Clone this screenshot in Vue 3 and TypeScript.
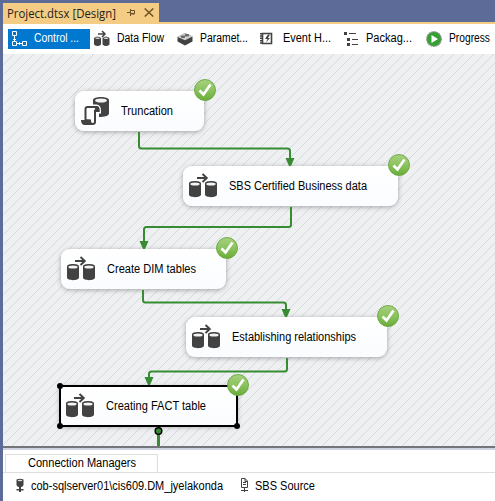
<script setup lang="ts">
interface Tool { name: string; label: string; width: number; column: number }
interface Task { id: string; label: string; x: number; y: number; w: number; textX: number; textW: number; kind: 'script' | 'flow'; selected?: boolean }

const tools: Tool[] = [
  { name: 'control', label: 'Control ...', width: 45, column: 82 },
  { name: 'flow', label: 'Data Flow', width: 47, column: 83 },
  { name: 'params', label: 'Paramet...', width: 48, column: 83 },
  { name: 'events', label: 'Event H...', width: 48, column: 83 },
  { name: 'package', label: 'Packag...', width: 46, column: 83 },
  { name: 'progress', label: 'Progress', width: 41, column: 73 },
]

const tasks: Task[] = [
  { id: 'trunc', label: 'Truncation', x: 75, y: 91, w: 129, textX: 46, textW: 52, kind: 'script' },
  { id: 'sbs', label: 'SBS Certified Business data', x: 183, y: 166, w: 215, textX: 46, textW: 138, kind: 'flow' },
  { id: 'dim', label: 'Create DIM tables', x: 61, y: 249, w: 165, textX: 46, textW: 89, kind: 'flow' },
  { id: 'rel', label: 'Establishing relationships', x: 186, y: 317, w: 201, textX: 46, textW: 124, kind: 'flow' },
  { id: 'fact', label: 'Creating FACT table', x: 60, y: 386, w: 177, textX: 46, textW: 100, kind: 'flow', selected: true },
]

const links: string[] = [
  'M139 132V146Q139 148.500 141.500 148.500H287.500Q290 148.500 290 151V159',
  'M291 207V224.500Q291 227 288.500 227H146.500Q144 227 144 229.500V242',
  'M143 290V300Q143 302.500 145.500 302.500H283.500Q286 302.500 286 305V310',
  'M287 358V369Q287 371.500 284.500 371.500H151.500Q149 371.500 149 374V378',
]
const arrows: [number, number][] = [[290, 166], [144, 249], [286, 317], [149, 385]]
</script>

<template>
  <div class="window">
    <header class="tabs">
      <div class="doc-tab">
        <svg class="label" width="112" height="19"><text class="title" x="0" y="15" textLength="109" lengthAdjust="spacingAndGlyphs">Project.dtsx [Design]</text></svg>
        <svg class="pin" width="9" height="9" viewBox="0 0 9 9"><path d="M0 4.500H3M3.500 1V8M3.500 2.500H7.500V6H3.500M3.500 5.500H8" /></svg>
        <svg class="close" width="10" height="9" viewBox="0 0 10 9"><path d="M.7.5 9.300 8.500M9.300.5.7 8.500" /></svg>
      </div>
    </header>

    <nav class="toolbar">
      <div v-for="t in tools" :key="t.name" class="tool" :class="{ active: t.name === 'control' }" :style="{ width: t.column + 'px' }">
        <svg class="tool-icon" width="18" height="18" viewBox="0 0 18 18">
          <g v-if="t.name === 'control'" fill="none" stroke="#fff">
            <path d="M.5 1.500h4v4h-4zM.5 11.500h4v4h-4zM10.500 11.500h4v4h-4zM2.500 6v5M5 13.500h5M1 9l1.500 1.500L4 9M7 12l1.500 1.500L7 15" />
          </g>
          <g v-else-if="t.name === 'flow'" fill="#424242">
            <path d="M0 8q3.500-3 7 0v6.500q-3.500 3-7 0zM8.500 8q3.500-3 7 0v6.500q-3.500 3-7 0z" />
            <path d="M4 4h6M8 1l3 3-3 3" fill="none" stroke="#424242" stroke-width="1.500" />
            <ellipse cx="3.500" cy="8.300" rx="2.300" ry=".8" fill="#ddd" /><ellipse cx="12" cy="8.300" rx="2.300" ry=".8" fill="#ddd" />
          </g>
          <g v-else-if="t.name === 'params'">
            <path d="M.5 7 8 3l7.500 3.500v5L8 15.500.5 11.500z" fill="#424242" />
            <path d="M.5 7 8 3l7.500 3.500L8 10.300z" fill="#d2d2d2" />
            <ellipse cx="6" cy="6.800" rx="2.400" ry="1.200" fill="#666" /><ellipse cx="10" cy="5.300" rx="2.400" ry="1.300" fill="#666" />
          </g>
          <g v-else-if="t.name === 'events'">
            <path d="M2.500 3.500h9v10h-9z" fill="#fff" stroke="#424242" stroke-width="1.600" />
            <path d="M1.500 3v11.500" stroke="#424242" stroke-width="3" stroke-dasharray="1.500 .8" />
            <path d="M8 4.500 5 9h2.500L6 12.500 10 8H8l2-3.500z" fill="#424242" />
          </g>
          <g v-else-if="t.name === 'package'" fill="#424242">
            <path d="M1 2h3v3H1zM4 8h3v3H4zM4 13h3v3H4zM6 3h7v1H6zM9 9h6v1H9zM9 14h6v1H9z" />
          </g>
          <g v-else>
            <circle cx="8" cy="9" r="7.300" fill="#35a034" stroke="#8c9389" stroke-width="1.200" stroke-dasharray="2 .6" />
            <path d="M5.500 5v8l6.500-4z" fill="#fff" />
          </g>
        </svg>
        <svg class="label" :width="t.width + 4" height="20"><text class="ui" x="0" y="13" :textLength="t.width" lengthAdjust="spacingAndGlyphs">{{ t.label }}</text></svg>
      </div>
    </nav>

    <main class="canvas">
      <svg class="diagram" width="492" height="392" viewBox="3 54 492 392">
        <defs>
          <pattern id="hatch" width="10" height="10" patternUnits="userSpaceOnUse">
            <path d="M-1 9 9-1M6 12 12 6" stroke="#d6d8dc" stroke-width="1" />
          </pattern>
          <linearGradient id="ok" x1="0" y1="0" x2="0" y2="1">
            <stop offset="0" stop-color="#a8d080" /><stop offset=".5" stop-color="#8bc35e" /><stop offset="1" stop-color="#69ac38" />
          </linearGradient>
          <linearGradient id="face" x1="0" y1="0" x2="0" y2="1">
            <stop offset="0" stop-color="#fff" /><stop offset="1" stop-color="#fafcff" />
          </linearGradient>
          <filter id="shade" x="-10%" y="-30%" width="120%" height="170%">
            <feDropShadow dx="0" dy="1" stdDeviation="2.500" flood-color="#000" flood-opacity=".32" />
          </filter>
        </defs>
        <rect x="3" y="54" width="492" height="392" fill="#eff0f2" />
        <rect x="3" y="54" width="492" height="392" fill="url(#hatch)" />

        <g v-for="t in tasks" :key="t.id" :transform="`translate(${t.x} ${t.y})`">
          <rect :width="t.w" height="40" :rx="t.selected ? 1 : 9" fill="url(#face)" filter="url(#shade)" />
          <g v-if="t.selected">
            <rect :width="t.w" height="40" fill="none" stroke="#000" stroke-width="2" />
            <circle cx="0" cy="0" r="3" /><circle cx="0" cy="40" r="3" /><circle :cx="t.w" cy="40" r="3" />
          </g>
          <g v-if="t.kind === 'flow'" fill="#424242">
            <path d="M6 17.500C6 14.300 18 14.300 18 17.500V28.500C18 32 6 32 6 28.500zM22 17.500C22 14.300 34 14.300 34 17.500V28.500C34 32 22 32 22 28.500z" />
            <ellipse cx="12" cy="18" rx="4.600" ry="1.500" fill="#f3f3f3" /><ellipse cx="28" cy="18" rx="4.600" ry="1.500" fill="#f3f3f3" />
            <path d="M14 12h9.500M19.500 8l4.300 4-4.300 4" fill="none" stroke="#424242" stroke-width="1.900" />
          </g>
          <g v-else fill="#424242">
            <path d="M18 9C18 5 34 5 34 9V22.500C34 25 29 26 24 26V15H18z" />
            <ellipse cx="26" cy="9.500" rx="6" ry="2" fill="#f3f3f3" />
            <path d="M10.500 29V18Q10.500 16 12.500 16H21.500Q23.500 16 23.500 20H20.500V31Q20.500 33 18 33H9Q7 33 7 30z" fill="#fff" stroke="#fff" stroke-width="5" />
            <path d="M10.500 29V18Q10.500 16 12.500 16H21.500Q23.500 16 23.500 20H20V31Q20 33 17.500 33Q15 33 15 29.500z" fill="#fff" stroke="#424242" stroke-width="2" />
            <path d="M19 17H20.200Q19.500 18 19.500 21H24.500V19Q24.500 15 21.500 15H17z" />
            <path d="M6 29H14.500Q15 33 18 34H10Q6 34 6 29z" />
          </g>
          <text class="ui" :x="t.textX" y="24" :textLength="t.textW" lengthAdjust="spacingAndGlyphs">{{ t.label }}</text>
        </g>

        <path v-for="(d, i) in links" :key="i" :d="d" fill="none" stroke="#368b33" stroke-width="2" />
        <path v-for="([x, y], i) in arrows" :key="'a' + i" :d="`M${x - 4.500} ${y - 8}H${x + 4.500}L${x + 1} ${y}H${x - 1}z`" fill="#368b33" />
        <path d="M158.500 434V446" stroke="#368b33" stroke-width="3" />
        <circle cx="158.500" cy="431" r="3.300" fill="#368b33" stroke="#000" stroke-width="1.500" />

        <g v-for="t in tasks" :key="'b' + t.id" :transform="`translate(${t.x + t.w + 1} ${t.y - 1})`">
          <circle r="10.500" fill="url(#ok)" stroke="#65a63a" stroke-width=".9" />
          <path d="M-5.500.5-1.500 4.500 5.500-5.500" fill="none" stroke="#fff" stroke-width="2.700" />
        </g>
      </svg>
    </main>

    <section class="connections">
      <div class="panel-head">
        <div class="panel-tab"><svg class="label" width="112" height="16"><text class="ui" x="0" y="12" textLength="108" lengthAdjust="spacingAndGlyphs">Connection Managers</text></svg></div>
      </div>
      <div class="sources">
        <svg class="source-icon" width="9" height="15" viewBox="0 0 9 15">
          <path d="M.5 1.500Q4 0 7.500 1.500V7Q7 9 5 9V11H7.500V12.500H5V14H3V12.500H.5V11H3V9Q1 9 .5 7z" fill="#424242" /><ellipse cx="4" cy="2.500" rx="2.400" ry=".7" fill="#ddd" />
        </svg>
        <svg class="label first" width="196" height="18"><text class="ui" x="0" y="13" textLength="192" lengthAdjust="spacingAndGlyphs">cob-sqlserver01\cis609.DM_jyelakonda</text></svg>
        <svg class="source-icon" width="9" height="15" viewBox="0 0 9 15">
          <path d="M1.500.5H5L7.500 3V9.500H1.500zM5 .5V3.500H7.500M3 4.500H6M3 6.500H6M4.500 9.500V14M1 12.500H8" fill="none" stroke="#424242" />
        </svg>
        <svg class="label" width="64" height="18"><text class="ui" x="0" y="13" textLength="60" lengthAdjust="spacingAndGlyphs">SBS Source</text></svg>
      </div>
    </section>
  </div>
</template>

<style>
body { margin: 0; }
</style>

<style scoped>
.window { width: 495px; height: 501px; box-sizing: border-box; padding-left: 3px; background: #5d6b99; overflow: hidden; display: flex; flex-direction: column; }
svg { display: block; flex: none; }
.label { overflow: visible; }
.tabs { height: 22px; box-sizing: border-box; padding-top: 3px; }
.doc-tab { width: 156px; height: 19px; box-sizing: border-box; padding-left: 4px; display: flex; align-items: center; background: #f5cc84; }
.pin { margin-left: 8px; fill: none; stroke: #6d5527; stroke-width: 1; }
.close { margin-left: 8px; fill: none; stroke: #6d5527; stroke-width: 1.5; }
.title { font: 12px "Open Sans", sans-serif; fill: #1e1e1e; }
.ui { font: 12px "Liberation Sans", Arial, sans-serif; fill: #000; }
.toolbar { height: 32px; box-sizing: border-box; border-top: 2px solid #f5cc84; padding: 5px 0 5px 5px; background: #fff; display: flex; }
.tool { height: 20px; box-sizing: border-box; display: flex; align-items: center; gap: 5px; padding-left: 4px; flex: none; }
.tool.active { background: #0078d0; gap: 4px; }
.tool.active .ui { fill: #fff; }
.canvas { height: 392px; flex: none; }
.connections { flex: 1; background: #fff; border-top: 2px solid #74757a; box-shadow: inset 0 2px #ced2e1; }
.panel-head { height: 25px; box-sizing: border-box; padding: 6px 0 0 2px; border-bottom: 1px solid #dedede; }
.panel-tab { width: 153px; height: 18px; box-sizing: border-box; border: 1px solid #dedede; border-bottom: 0; padding-left: 22px; }
.sources { height: 25px; display: flex; align-items: center; padding-left: 13px; }
.source-icon { margin-right: 6px; }
.first { margin-right: 13px; }
</style>
